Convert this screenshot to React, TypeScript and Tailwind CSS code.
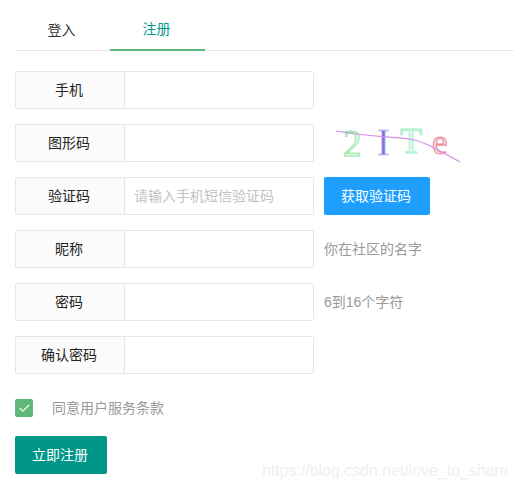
import { Check } from 'lucide-react';

const FONT = "font-['Liberation_Sans','Noto_Sans_CJK_SC',sans-serif]";

interface FormRowProps {
  label: string;
  placeholder?: string;
  children?: React.ReactNode;
}

function FormRow({ label, placeholder, children }: FormRowProps) {
  return (
    <div className="flex items-center h-[38px] mb-[15px]">
      <div className="flex w-[299px] h-[38px] border border-[#e6e6e6] rounded-[2px]">
        <div className="w-[109px] shrink-0 flex items-center justify-center pr-[2px] bg-[#fbfbfb] border-r border-[#e6e6e6] text-sm text-[#222]">
          {label}
        </div>
        <div className="flex-1 flex items-center pl-[9px] text-sm text-[#c2c2c2]">{placeholder}</div>
      </div>
      {children}
    </div>
  );
}

function Captcha() {
  return (
    <svg width="128" height="60" viewBox="0 -10 128 60" className="ml-[21px] mt-[3px]">
      <text x="8" y="31" fontSize="37" fontFamily="'Liberation Serif', serif" fill="#e4fbe7" stroke="#93e8a2" strokeWidth="1">2</text>
      <text x="42" y="30" fontSize="38" fontFamily="'Liberation Serif', serif" fill="#7f70dc" stroke="#d5d0f5" strokeWidth="0.8">I</text>
      <text x="65" y="28" fontSize="36" fontFamily="'Liberation Serif', serif" fill="#e4fbef" stroke="#a5eec6" strokeWidth="1">T</text>
      <text x="97" y="29" fontSize="35" fontFamily="'Liberation Serif', serif" fill="#fbdfe4" stroke="#e98a9c" strokeWidth="1">e</text>
      <path d="M1 6 C30 11 55 12 75 14 C92 17 108 28 125 37" fill="none" stroke="#cf8ce8" strokeWidth="1.2" />
    </svg>
  );
}

export default function App() {
  return (
    <div className={`${FONT} w-[518px] h-[489px] bg-white relative overflow-hidden pl-[15px] pt-[9px]`}>
      <div className="flex w-[499px] h-[42px] border-b border-[#e6e6e6] mb-[20px]">
        <div className="w-[95px] h-[41px] flex items-center justify-center pr-[2px] text-sm text-[#333]">登入</div>
        <div className="w-[95px] h-[42px] flex items-center justify-center pr-[2px] text-sm text-[#009688] border-b-2 border-[#5fb878]">注册</div>
      </div>

      <FormRow label="手机" />
      <FormRow label="图形码">
        <Captcha />
      </FormRow>
      <FormRow label="验证码" placeholder="请输入手机短信验证码">
        <button className="ml-[10px] w-[106px] h-[38px] pr-[2px] rounded-[2px] bg-[#1e9fff] text-sm text-white">获取验证码</button>
      </FormRow>
      <FormRow label="昵称">
        <span className="ml-[10px] text-sm text-[#999]">你在社区的名字</span>
      </FormRow>
      <FormRow label="密码">
        <span className="ml-[10px] text-sm text-[#999]">6到16个字符</span>
      </FormRow>
      <FormRow label="确认密码" />

      <div className="flex items-center mt-[25px] h-[18px]">
        <div className="w-[18px] h-[18px] rounded-[2px] bg-[#5fb878] flex items-center justify-center">
          <Check size={13} color="#fff" strokeWidth={2} />
        </div>
        <span className="ml-[19px] text-sm text-[#999]">同意用户服务条款</span>
      </div>

      <button className="block mt-[19px] w-[92px] h-[38px] pr-[2px] rounded-[2px] bg-[#009688] text-sm text-white">立即注册</button>

      <span className="absolute left-[262px] top-[462px] text-[15.9px] leading-[18px] text-[#efefef] font-['Liberation_Sans',sans-serif]">
        https://blog.csdn.net/love_to_share
      </span>
    </div>
  );
}
